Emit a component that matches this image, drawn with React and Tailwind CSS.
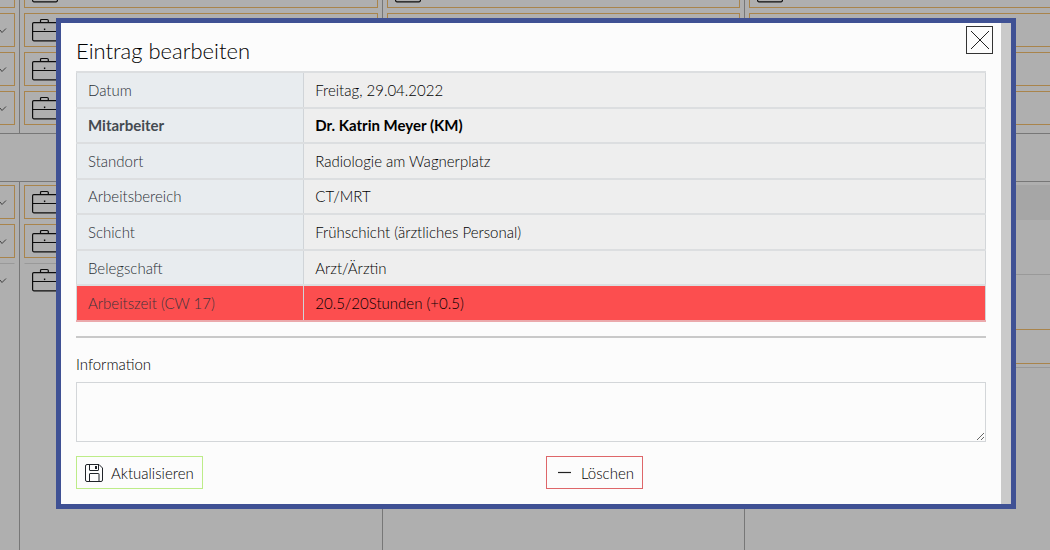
import React, { useState } from 'react';

const rows = [
  { label: 'Datum', value: 'Freitag, 29.04.2022' },
  { label: 'Mitarbeiter', value: 'Dr. Katrin Meyer (KM)', bold: true },
  { label: 'Standort', value: 'Radiologie am Wagnerplatz' },
  { label: 'Arbeitsbereich', value: 'CT/MRT' },
  { label: 'Schicht', value: 'Frühschicht (ärztliches Personal)' },
  { label: 'Belegschaft', value: 'Arzt/Ärztin' },
  { label: 'Arbeitszeit (CW 17)', value: '20.5/20Stunden (+0.5)', alert: true }
];

const Briefcase = () => (
  <svg className="ml-[7px] h-6 w-[26px] shrink-0" viewBox="0 0 26 24" fill="none" stroke="#0c0c0c">
    <rect x="0.6" y="4.6" width="24.8" height="18.2" rx="1.2" strokeWidth="1.2" />
    <path d="M8.5 4V2.6Q8.5 1.5 9.7 1.5h5.4q1.2 0 1.2 1.1V4" strokeWidth="1.2" />
    <path d="M0.6 13.5h24.8" strokeWidth="1" />
    <path d="M12.6 10.5v1.6" strokeWidth="1.4" />
  </svg>
);

const Check = () => (
  <svg className="h-3 w-3" viewBox="0 0 12 12" fill="none" stroke="#333">
    <path d="M0 6l2 2.5L6 4.500" strokeWidth="0.9" />
  </svg>
);

// One shift slot in the plan behind the dialog
const Slot = ({ type, plain }) => (
  <div className={`flex h-[34px] items-center border ${plain ? 'border-transparent border-t-[#999]' : 'border-[#a9844b]'} ${type === 'check' ? 'border-l-0' : ''}`}>
    {type === 'check' && <Check />}
    {type === 'case' && <Briefcase />}
  </div>
);

const Column = ({ type, count, lastPlain }) => (
  <div className={`flex flex-col gap-[5px] border-r border-[#777] ${type === 'check' ? 'pr-1' : 'px-1'}`}>
    {Array.from({ length: count }, (_, i) => (
      <Slot key={i} type={type} plain={lastPlain && i === count - 1} />
    ))}
  </div>
);

const Schedule = () => (
  <div className="min-h-screen overflow-hidden bg-[#afafaf]">
    <div className="-mt-[26px] grid grid-cols-[20px_1fr_1fr_305px] border-b border-[#777] [&>div]:pb-2">
      <Column type="check" count={4} />
      <Column type="case" count={4} />
      <Column type="case" count={4} />
      <div className="-mr-1 flex flex-col gap-[5px] pl-1">
        {[0, 1, 2, 3].map((n) => <Slot key={n} type="case" />)}
      </div>
    </div>

    <div className="mt-[47px] grid min-h-[371px] grid-cols-[20px_1fr_1fr_305px] border-t border-[#777] [&>div]:pt-[3px]">
      <Column type="check" count={3} lastPlain />
      <Column type="case" count={3} lastPlain />
      <Column type="case" count={3} lastPlain />
      <div>
        <div className="h-[35px] bg-[#a6a6a6]" />
        <div className="h-[55px] border-b border-[#999]" />
        <div className="mt-[54px] h-[35px] border-y border-[#a9844b]" />
        <div className="mt-[3px] border-t border-[#999]" />
      </div>
    </div>
  </div>
);

const SaveIcon = () => (
  <svg className="h-[18px] w-[18px]" viewBox="0 0 18 18" fill="none" stroke="#1f2328" strokeWidth="1">
    <path d="M0.5 2q0-1.5 1.5-1.5h12L17.5 4v12q0 1.5-1.5 1.5H2Q0.5 17.5 0.5 16z" />
    <path d="M4.5 17V10q0-.5.5-.5h8.5q.5 0 .5.5v7M4.5.5V6q0 .5.5.5h8q.5 0 .5-.5V.8" />
    <rect x="10.5" y="2.5" width="1" height="2" />
  </svg>
);

const App = () => {
  const [open, setOpen] = useState(true);
  const [info, setInfo] = useState('');

  return (
    <div className="font-[Lato,'Open_Sans',sans-serif] text-[15px] leading-5 font-light text-black">
      <Schedule />

      {open && (
        <div className="fixed inset-0 flex items-start pt-[18px] pr-[34px] pl-14">
          <div role="dialog" aria-labelledby="dialog-title" className="relative flex w-full border-5 border-[#3f5194] bg-[#fcfcfc]">
            <div className="min-w-0 flex-1 px-[15px] pt-3 pb-[15px]">
              <h1 id="dialog-title" className="mb-1 text-[22px] leading-8">Eintrag bearbeiten</h1>

              <table className="h-[251px] w-full table-fixed border-collapse border border-[#d3d6d9]">
                <tbody>
                  {rows.map((row) => (
                    <tr
                      key={row.label}
                      className={`border-y-2 ${row.alert ? 'border-t-[#d9a5a8] border-b-[#eba9ac] bg-[#fc4e4f]' : 'border-[#dcdee0] bg-[#eeeeee]'} ${row.bold ? 'font-bold' : 'font-light'}`}
                    >
                      <th
                        scope="row"
                        className={`w-1/4 border-r border-[#d0d4d8] px-[11px] text-left ${row.alert ? 'text-[#40343a]' : 'bg-[#e8ecef]'} ${row.bold ? 'font-bold text-[#444a51]' : 'font-light'} ${!row.alert && !row.bold ? 'text-[#2b3036]' : ''}`}
                      >
                        {row.label}
                      </th>
                      <td className="px-[11px]">{row.value}</td>
                    </tr>
                  ))}
                </tbody>
              </table>

              <hr className="mt-[14px] border-t-2 border-[#c9c9c9]" />

              <label htmlFor="information" className="mt-4 block">Information</label>
              <textarea
                id="information"
                value={info}
                onChange={(e) => setInfo(e.target.value)}
                className="mt-2 block h-[60px] w-full resize border border-[#d3d6d9] bg-[#fcfcfc] p-2 focus:outline-none"
              />

              <div className="mt-[14px] grid grid-cols-2 gap-[30px]">
                <div>
                  <button type="button" className="flex h-[33px] items-center gap-2 border border-[#bdec88] px-2">
                    <SaveIcon />
                    Aktualisieren
                  </button>
                </div>
                <div>
                  <button type="button" className="flex h-[33px] items-center gap-2 border border-[#de6669] px-2" onClick={() => setOpen(false)}>
                    <svg className="h-[18px] w-[18px]" viewBox="0 0 18 18" stroke="#222">
                      <path d="M3 8.500h13" strokeWidth="1.2" />
                    </svg>
                    Löschen
                  </button>
                </div>
              </div>
            </div>

            {/* Scroll track */}
            <div className="w-[10px] bg-[#cacaca]" />

            <button
              type="button"
              aria-label="Schließen"
              onClick={() => setOpen(false)}
              className="absolute top-[3px] right-[18px] flex h-7 w-[27px] items-center justify-center border border-[#333]"
            >
              <svg className="h-5 w-5" viewBox="0 0 20 20" stroke="#222" strokeWidth="1">
                <path d="M1 1l18 18M19 1L1 19" />
              </svg>
            </button>
          </div>
        </div>
      )}
    </div>
  );
};

export default App;
